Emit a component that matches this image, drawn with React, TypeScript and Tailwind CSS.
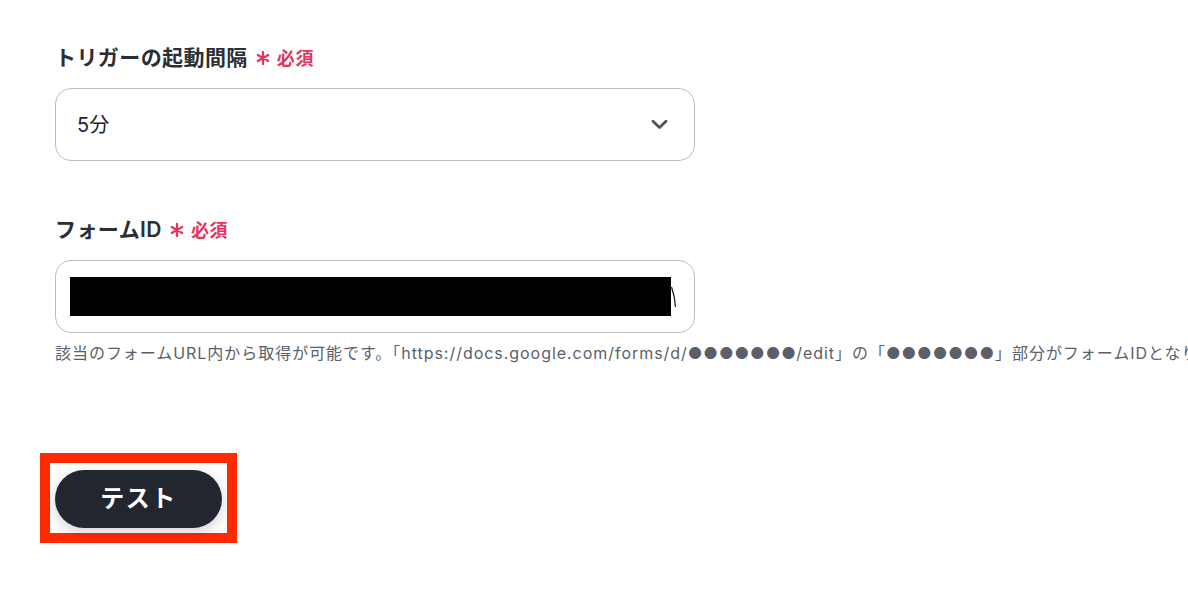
import React from "react";

function Required() {
  return (
    <span className="ml-2 inline-flex items-center gap-[7px] text-[#e8335d]">
      <svg width="14" height="14" viewBox="0 0 14 14" fill="none">
        <path
          d="M7 1v12M1.8 4l10.4 6M1.8 10l10.4-6"
          stroke="#e8335d"
          strokeWidth="2.2"
          strokeLinecap="round"
        />
      </svg>
      <span className="text-[18px] font-semibold tracking-[0.04em]">必須</span>
    </span>
  );
}

export default function App() {
  return (
    <div
      className="h-[616px] w-[1188px] overflow-hidden bg-white pl-[55px] pt-[44px]"
      style={{ fontFamily: '"Inter", "Noto Sans CJK JP", sans-serif' }}
    >
      {/* Trigger interval */}
      <label className="flex h-[28px] items-center text-[21px] font-semibold tracking-[0.02em] text-[#2a2e35]">
        トリガーの起動間隔
        <Required />
      </label>
      <div className="mt-4 flex h-[73px] w-[640px] items-center justify-between rounded-2xl border border-[#b9bfc7] pl-[21px] pr-[26px]">
        <span className="text-[20px] text-[#1f2328]">5分</span>
        <svg width="17" height="11" viewBox="0 0 17 11" fill="none">
          <path d="M2 2.2l6.5 6.3 6.5-6.3" stroke="#4b525c" strokeWidth="2.8" strokeLinecap="round" strokeLinejoin="round" />
        </svg>
      </div>

      {/* Form ID */}
      <label className="mt-[55px] flex h-[28px] items-center text-[21px] font-semibold tracking-[0.02em] text-[#2a2e35]">
        フォームID
        <Required />
      </label>
      <div className="mt-4 flex h-[73px] w-[640px] items-center rounded-2xl border border-[#b9bfc7] pl-[14px]">
        <div className="h-[39px] w-[601px] bg-black" />
        <svg width="6" height="24" viewBox="0 0 6 24" fill="none" className="mt-[1px]">
          <path d="M0.5 2 C2 6 4 12 4.5 22" stroke="#111" strokeWidth="1.2" />
        </svg>
      </div>
      <p className="mt-[9px] whitespace-nowrap text-[16px] leading-[22px] tracking-[0.06em] text-[#5a6069]">
        該当のフォームURL内から取得が可能です。「https://docs.google.com/forms/d/●●●●●●●/edit」の「●●●●●●●」部分がフォームIDとなります。
      </p>

      {/* Test button */}
      <div className="ml-[-15px] mt-[89px] inline-block border-[10px] border-[#ff2a00] px-[5px] pb-[5px] pt-[7px]">
        <button className="flex h-[58px] w-[167px] items-center justify-center rounded-full bg-[#22272f] text-[24px] font-semibold tracking-[0.06em] text-white shadow-[0_4px_14px_rgba(0,0,0,0.18)]">
          テスト
        </button>
      </div>
    </div>
  );
}
